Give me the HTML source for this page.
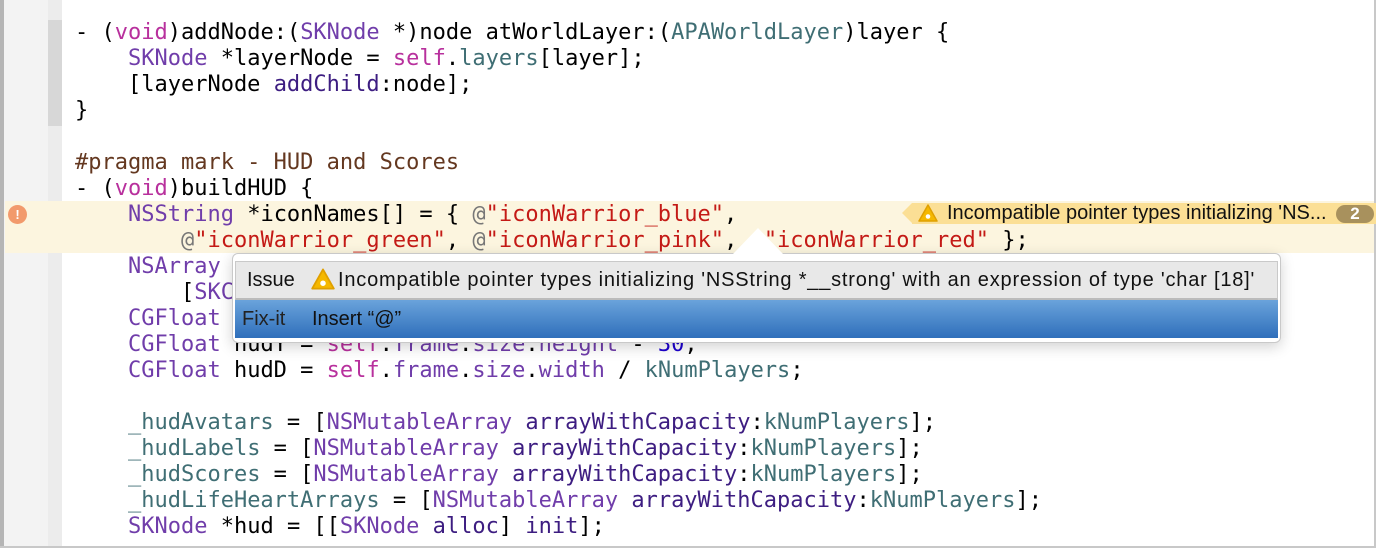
<!DOCTYPE html>
<html><head><meta charset="utf-8"><style>
*{margin:0;padding:0;box-sizing:border-box}
body{width:1376px;height:548px;overflow:hidden;background:#fff;position:relative;font-family:"DejaVu Sans Mono","Liberation Mono",monospace}
.gut{position:absolute;left:0;top:0;width:48px;height:548px;background:#f3f3f3;border-left:4px solid #b5b5b5}
.strip{position:absolute;left:48px;top:0;width:14px;height:548px;background:#ececec}
.scope{position:absolute;left:48px;top:20px;width:14px;height:106px;background:#d7d7d7}
.hl{position:absolute;left:5px;top:201px;width:1369px;height:52px;background:#fcf5df}
.rb{position:absolute;right:0;top:0;width:2px;height:548px;background:#c8c8c8}
.bb{position:absolute;left:0;bottom:0;width:1376px;height:2px;background:#c8c8c8}
pre{position:absolute;left:75px;top:20px;font-size:22px;line-height:26px;color:#000;font-family:"DejaVu Sans Mono",monospace}
.k{color:#b8309d}.t{color:#703daa}.m{color:#3d1d81}.p{color:#3f6e74}.s{color:#c41a16}.pr{color:#643820}.n{color:#1c00cf}.a{color:#777}
.err{position:absolute;left:8px;top:205px;width:19px;height:19px;border-radius:50%;background:#f29a6c;color:#fff;font:bold 13px "Liberation Sans",sans-serif;text-align:center;line-height:19px}
.warn{position:absolute;left:912px;top:203px;width:464px;height:21px;background:#fbdf95;font:20px "Liberation Sans",sans-serif;color:#111;line-height:21px;padding-left:35px}
.warn:before{content:"";position:absolute;left:-10px;top:0;border-right:10px solid #fbdf95;border-top:10.5px solid transparent;border-bottom:10.5px solid transparent}
.tri{position:absolute;width:20px;height:18px}
.badge{position:absolute;left:1336px;top:205px;width:38px;height:18px;border-radius:9px;background:#a8915d;color:#fff;font:bold 17px "Liberation Sans",sans-serif;text-align:center;line-height:18px}
.pop{position:absolute;left:232px;top:253px;width:1049px;height:90px;background:#fff;border:1px solid #c9c9c9;border-radius:6px;box-shadow:0 4px 14px rgba(0,0,0,.18)}
.arrow{position:absolute;left:733px;top:228px;width:0;height:0;border-left:25px solid transparent;border-right:25px solid transparent;border-bottom:26px solid #fff}
.row1{position:absolute;left:235px;top:261px;width:1043px;height:39px;background:#e8e8e8;border:1px solid #c9c9c9;border-bottom:2px solid #bbb;font:20px "Liberation Sans",sans-serif;line-height:36px;color:#111}
.row2{position:absolute;left:235px;top:300px;width:1043px;height:38px;background:linear-gradient(#6aa3db,#2f6fbb);font:20px "Liberation Sans",sans-serif;line-height:38px;color:#111}
</style></head><body>
<div class="gut"></div><div class="strip"></div><div class="scope"></div>
<div class="hl"></div>
<div class="rb"></div><div class="bb"></div>
<pre>- (<span class="k">void</span>)addNode:(<span class="t">SKNode</span> *)node atWorldLayer:(<span class="p">APAWorldLayer</span>)layer {
    <span class="t">SKNode</span> *layerNode = <span class="k">self</span>.<span class="p">layers</span>[layer];
    [layerNode <span class="m">addChild</span>:node];
}

<span class="pr">#pragma mark - HUD and Scores</span>
- (<span class="k">void</span>)buildHUD {
    <span class="t">NSString</span> *iconNames[] = { <span class="a">@</span><span class="s">"iconWarrior_blue"</span>,
        <span class="a">@</span><span class="s">"iconWarrior_green"</span>, <span class="a">@</span><span class="s">"iconWarrior_pink"</span>, <span class="a">@</span><span class="s">"iconWarrior_red"</span> };
    <span class="t">NSArray</span> *colors = @[[<span class="t">SKColor</span> <span class="m">greenColor</span>]];
        [<span class="t">SKColor</span> <span class="m">blueColor</span>]];
    <span class="t">CGFloat</span> hudX = <span class="n">30</span>;
    <span class="t">CGFloat</span> hudY = <span class="k">self</span>.<span class="t">frame</span>.<span class="t">size</span>.<span class="t">height</span> - <span class="n">30</span>;
    <span class="t">CGFloat</span> hudD = <span class="k">self</span>.<span class="t">frame</span>.<span class="t">size</span>.<span class="t">width</span> / <span class="p">kNumPlayers</span>;

    <span class="p">_hudAvatars</span> = [<span class="t">NSMutableArray</span> <span class="m">arrayWithCapacity</span>:<span class="p">kNumPlayers</span>];
    <span class="p">_hudLabels</span> = [<span class="t">NSMutableArray</span> <span class="m">arrayWithCapacity</span>:<span class="p">kNumPlayers</span>];
    <span class="p">_hudScores</span> = [<span class="t">NSMutableArray</span> <span class="m">arrayWithCapacity</span>:<span class="p">kNumPlayers</span>];
    <span class="p">_hudLifeHeartArrays</span> = [<span class="t">NSMutableArray</span> <span class="m">arrayWithCapacity</span>:<span class="p">kNumPlayers</span>];
    <span class="t">SKNode</span> *hud = [[<span class="t">SKNode</span> <span class="m">alloc</span>] <span class="m">init</span>];</pre>
<div class="err">!</div>
<div class="warn">Incompatible pointer types initializing 'NS...</div>
<svg class="tri" style="left:918px;top:204px" viewBox="0 0 20 18"><path d="M10 1 L19 17 L1 17 Z" fill="#f5b800" stroke="#e0a000" stroke-linejoin="round" stroke-width="1.5"/><circle cx="10" cy="12.5" r="2.3" fill="#fff"/></svg>
<div class="badge">2</div>
<div class="pop"></div>
<div class="arrow"></div>
<div class="row1"><span style="margin-left:11px">Issue</span></div>
<svg class="tri" style="left:311px;top:268px;width:24px;height:22px" viewBox="0 0 20 18"><path d="M10 1 L19 17 L1 17 Z" fill="#f5b800" stroke="#e0a000" stroke-linejoin="round" stroke-width="1.5"/><circle cx="10" cy="12.5" r="2.3" fill="#fff"/></svg>
<div style="position:absolute;left:338px;top:262px;font:20px 'Liberation Sans',sans-serif;letter-spacing:0.8px;line-height:36px;color:#111;white-space:nowrap">Incompatible pointer types initializing 'NSString *__strong' with an expression of type 'char [18]'</div>
<div class="row2"><span style="margin-left:7px;color:#222">Fix-it</span><span style="position:absolute;left:77px">Insert “@”</span></div>
</body></html>
